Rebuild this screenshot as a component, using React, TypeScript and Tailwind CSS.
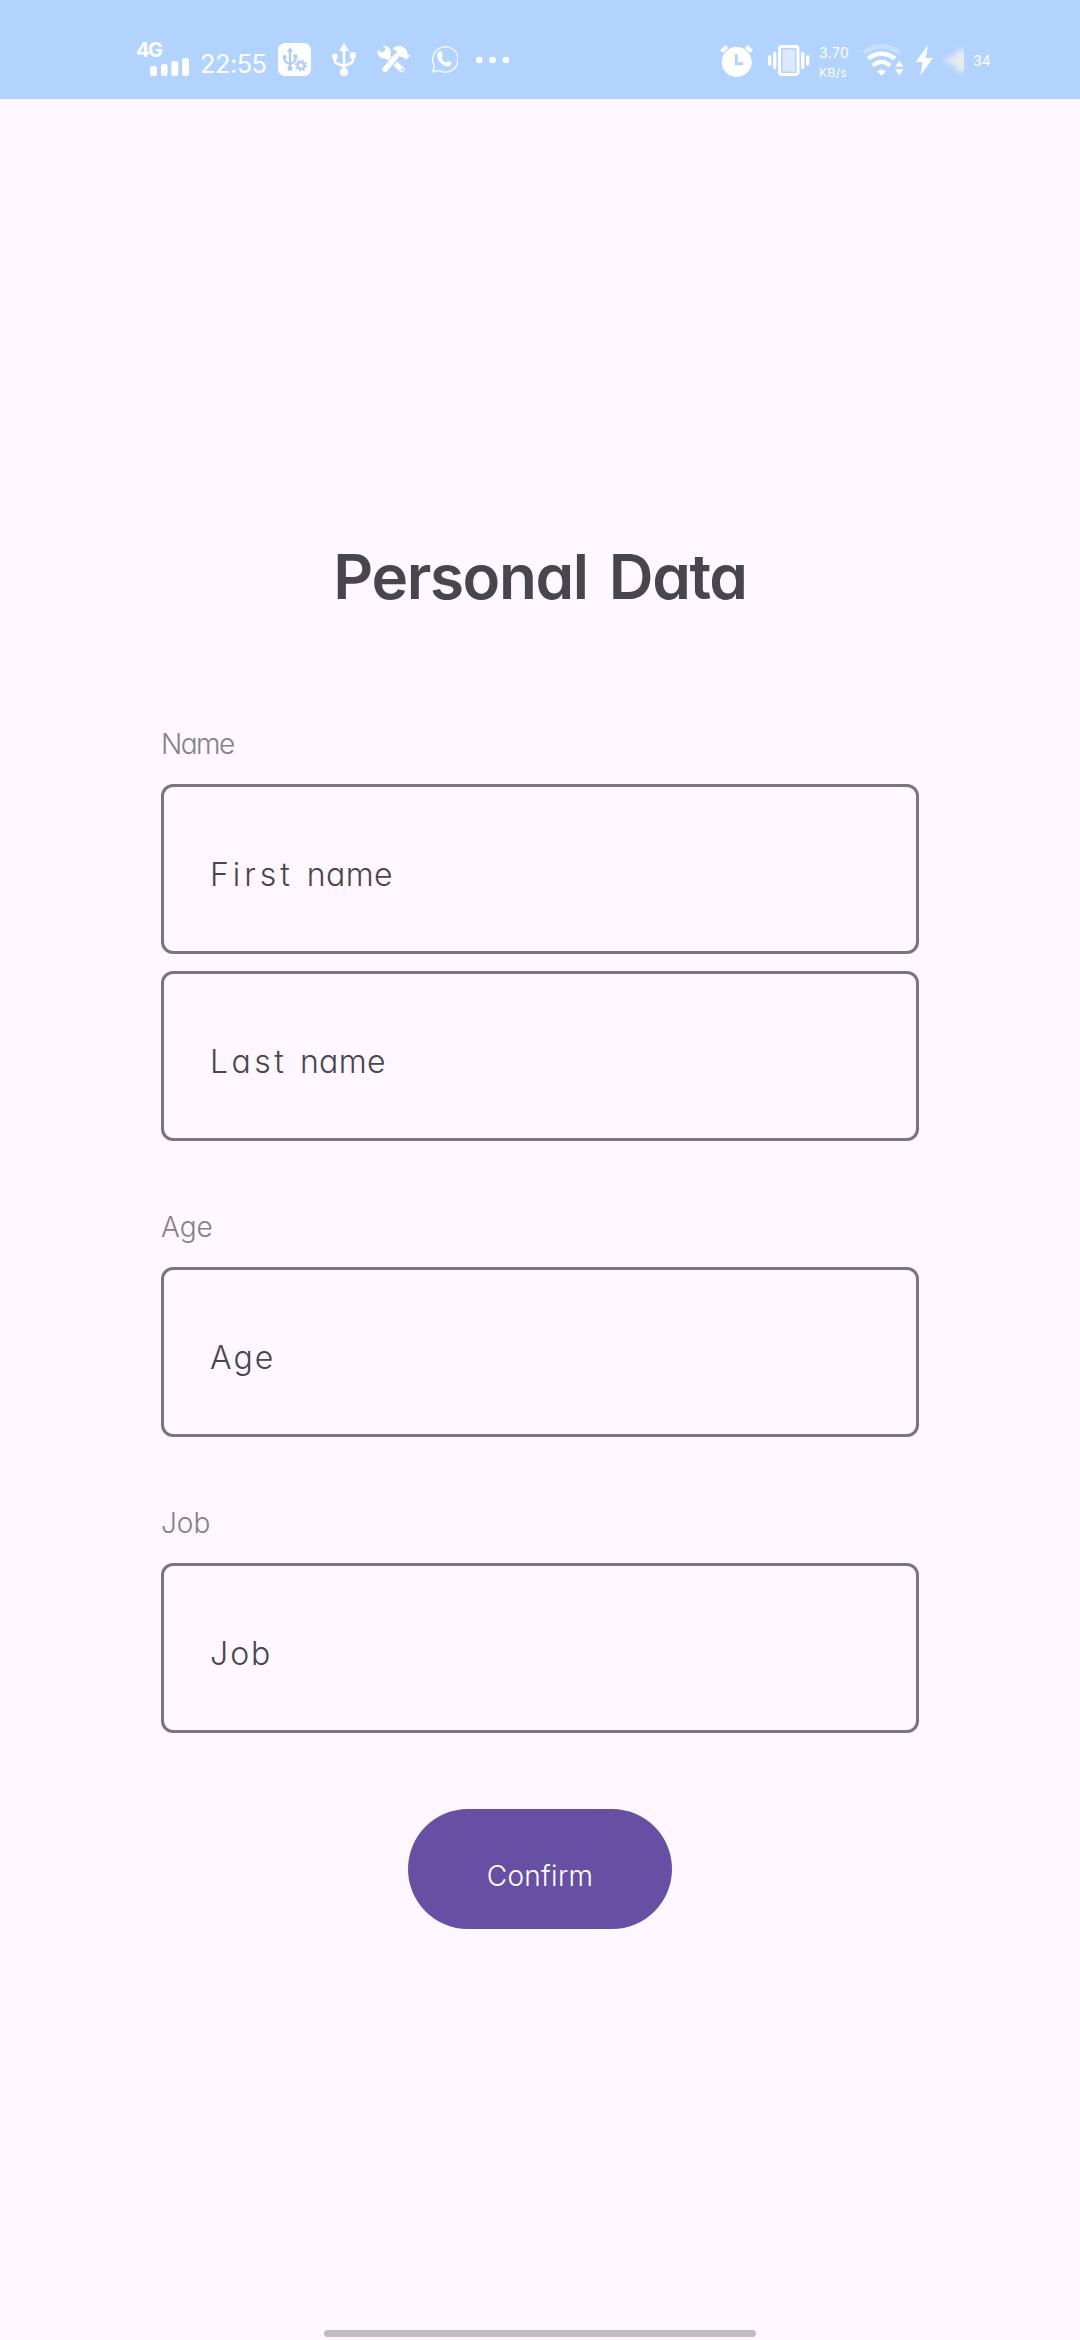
import React from "react";

type IconProps = { x: number; w: number; className?: string; children: React.ReactNode };

/* Status bar glyph: drawn in bar coordinates, clipped to its own slot. */
function Glyph({ x, w, className = "", children }: IconProps) {
  return (
    <svg
      width={w}
      height={99}
      viewBox={`${x} 0 ${w} 99`}
      className={`block shrink-0 ${className}`}
      fill="none"
      stroke="none"
    >
      {children}
    </svg>
  );
}

function StatusBar() {
  return (
    <header className="flex h-[99px] w-full bg-[#b3d3ff] pl-[136px] text-white">
      <div className="relative w-[54px] shrink-0">
        <span className="absolute left-0 top-[40px] text-[20px] leading-5 font-bold tracking-[-1.5px]">4G</span>
        <Glyph x={136} w={54}>
          <g fill="#fff">
            <rect x="150" y="66" width="7" height="10" rx="2.5" />
            <rect x="161" y="64" width="6.5" height="12" rx="2.5" />
            <rect x="171.3" y="61" width="7" height="15" rx="2.5" />
            <rect x="182" y="58" width="7" height="18" rx="2.5" />
          </g>
        </Glyph>
      </div>
      <span className="mt-[49px] ml-[10px] w-[69px] shrink-0 text-[25.5px] leading-[30px] tracking-[-0.6px] whitespace-nowrap">22:55</span>
      <Glyph x={278} w={33} className="ml-[9px]">
        <rect x="278" y="43" width="33" height="33" rx="7" fill="#fff" />
        <g stroke="#a9ccfb" strokeWidth="2.2">
          <path d="M290 50v18M284.600 57v2.500q0 3 5.400 4.500M295.400 56v3q0 3-5.400 5" />
          <circle cx="301" cy="65.500" r="3.400" />
          <circle cx="301" cy="65.500" r="5.200" strokeWidth="1.800" strokeDasharray="2 2.080" />
        </g>
        <g fill="#a9ccfb">
          <path d="M290 47l3 5h-6z" />
          <circle cx="290" cy="68.500" r="2.500" />
          <circle cx="284.600" cy="57" r="2" />
          <rect x="293.500" y="54.500" width="3.800" height="3.800" />
        </g>
      </Glyph>
      <Glyph x={332} w={24} className="ml-[21px]">
        <path d="M344 49v22M334.800 57v3.500q0 2 2 3l7.200 2.700M353 54v6q0 2-2 3l-7 3.200" stroke="#fff" strokeWidth="2.600" />
        <g fill="#fff">
          <path d="M344 43l5 8h-10z" />
          <circle cx="344" cy="72" r="4" />
          <circle cx="334.800" cy="56.500" r="2.900" />
          <rect x="350" y="52.500" width="5.700" height="5.500" />
        </g>
      </Glyph>
      <Glyph x={377} w={34} className="ml-[21px]">
        <path d="M388 57L401.500 69.500" stroke="#fff" strokeWidth="5.600" strokeLinecap="round" />
        <path d="M396.500 57L386 68" stroke="#b3d3ff" strokeWidth="7.500" />
        <path d="M396.500 56L385 69.500" stroke="#fff" strokeWidth="5.400" strokeLinecap="round" />
        <path d="M377.500 50l4.500 2.500 3-1.800.3-3.200L382 46q5.500-.8 8 3 1.500 3 .2 6l-4 3.500q-4 .5-6.500-1.500-2.700-2.500-2.200-7z" fill="#fff" />
        <path d="M392.500 48.500q5-4 10.500-1.500l4 3.500.3 3 2.700 2.300-3.800 4-3-2.600-2.500-.2-3-3q-.5-3.500-5.200-5.500z" fill="#fff" />
        <circle cx="402" cy="69.800" r="1.200" fill="#b3d3ff" />
      </Glyph>
      <Glyph x={430} w={28} className="ml-[19px]">
        <path d="M432.800 72l1.600-6.200A12.700 12.700 0 1 1 439.200 70.500Z" stroke="#f1f8ff" strokeWidth="1.500" strokeLinejoin="round" />
        <path d="M437.200 54.500q1.300-3.500 4-3.200l1.900 4.300-1.600 2.600q1.800 3.500 4.900 4.400l1.900-1.700 3.200 1.700q.2 3.300-3.500 3.900-3.800.2-7.500-3.700-4-4.500-3.300-8.300z" fill="#fff" />
      </Glyph>
      <Glyph x={475} w={35} className="ml-[17px]">
        <g fill="#fff">
          <circle cx="479.200" cy="60" r="3.300" />
          <circle cx="492.500" cy="60" r="3.300" />
          <circle cx="506" cy="60" r="3.300" />
        </g>
      </Glyph>

      <Glyph x={719} w={35} className="ml-[209px]">
        <circle cx="736.700" cy="62" r="15" fill="#fff" />
        <path d="M721.500 51.500l5.500-5M751.700 51.500l-5.500-5" stroke="#fff" strokeWidth="3.800" />
        <path d="M736.300 54v9.700h7" stroke="#b3d3ff" strokeWidth="3" />
      </Glyph>
      <Glyph x={767} w={43} className="ml-[13px]">
        <rect x="779.500" y="46.500" width="18.500" height="28" rx="2.500" fill="#b3d3ff" stroke="#fff" strokeWidth="3" />
        <rect x="782.500" y="49.500" width="12.500" height="22" fill="#dceaff" />
        <path d="M774.700 53.500v14M802.700 53.500v14M769.700 57v7M807.700 57v7" stroke="#fff" strokeWidth="3.300" strokeLinecap="round" />
      </Glyph>
      <div className="ml-[9px] flex w-[31px] shrink-0 flex-col pt-[43px] whitespace-nowrap">
        <span className="text-[14px] leading-5 tracking-[0.4px]">3.70</span>
        <span className="text-[12px] leading-5 tracking-[0.4px]">KB/s</span>
      </div>
      <Glyph x={861} w={43} className="ml-[11px]">
        <path d="M863.500 52.500Q881.500 40.500 899.500 52.500" stroke="#c6deff" strokeWidth="4.500" />
        <path d="M868 58.500Q881.500 49 895 58.500" stroke="#fff" strokeWidth="4.300" />
        <path d="M873 65.700Q881.500 58 890 65.700" stroke="#fff" strokeWidth="4.200" />
        <path d="M877 71.500q4.500-3.800 9 0l-4.500 4.300z" fill="#fff" />
        <path d="M899.300 60.500l4 6h-8zM899.300 75.500l4-6.300h-8z" fill="#fff" />
      </Glyph>
      <Glyph x={915} w={19} className="ml-[11px]">
        <path d="M928 45l-12.300 17h7l-2.300 13.500L933 58h-7.200z" fill="#fff" />
      </Glyph>
      <Glyph x={938} w={26} className="ml-[4px]">
        <defs>
          <filter id="glow" x="-50%" y="-50%" width="200%" height="200%">
            <feGaussianBlur stdDeviation="2.200" />
          </filter>
        </defs>
        <path d="M942 60l12-4 4-6h12v22h-12l-4-7z" fill="#e6e9f0" filter="url(#glow)" />
      </Glyph>
      <span className="mt-[51px] ml-[9px] text-[14px] leading-5">34</span>
    </header>
  );
}

function Label({ children, spacing }: { children: string; spacing: string }) {
  return <div className={`mb-5 h-10 text-[28px] leading-10 font-light text-[#858187] ${spacing}`}>{children}</div>;
}

function Field({ children }: { children: React.ReactNode }) {
  return (
    <div className="flex h-[170px] w-full items-center rounded-[12px] border-3 border-[#79747e] pt-[12px] pl-[46px]">
      <span className="text-[32px] leading-10 font-light tracking-[2px] whitespace-pre text-[#49454f]">{children}</span>
    </div>
  );
}

export default function App() {
  return (
    <div className="flex h-[2340px] w-[1080px] flex-col overflow-hidden bg-[#fef7ff] font-['Inter',sans-serif] [font-feature-settings:'cv11']">
      <StatusBar />
      <main className="flex flex-1 flex-col items-center">
        <h1 className="mt-[438px] h-20 text-[62px] leading-[80px] font-semibold tracking-[-1.4px] [word-spacing:7px] whitespace-nowrap text-[#49454f]">Personal Data</h1>
        <form className="mt-[107px] flex w-[758px] flex-col">
          <Label spacing="tracking-[-1.5px]">Name</Label>
          <div className="flex flex-col gap-[17px]">
            <Field>
              <span className="tracking-[4px]">First </span>
              <span className="tracking-[0.4px]">name</span>
            </Field>
            <Field>
              <span className="tracking-[3.500px]">Last </span>
              <span className="tracking-[0.4px]">name</span>
            </Field>
          </div>
          <div className="mt-[66px]">
            <Label spacing="tracking-[0px]">Age</Label>
            <Field>Age</Field>
          </div>
          <div className="mt-[66px]">
            <Label spacing="tracking-[0px]">Job</Label>
            <Field>Job</Field>
          </div>
          <button
            type="button"
            className="mt-[76px] flex h-[120px] w-[264px] items-center justify-center self-center rounded-full bg-[#6750a4] pt-[14px] text-[28px] leading-10 font-light tracking-[0.3px] text-white"
          >
            Confirm
          </button>
        </form>
      </main>
      <div className="mb-[3px] h-[7px] w-[432px] self-center rounded-full bg-[#c1bbc2]" />
    </div>
  );
}
